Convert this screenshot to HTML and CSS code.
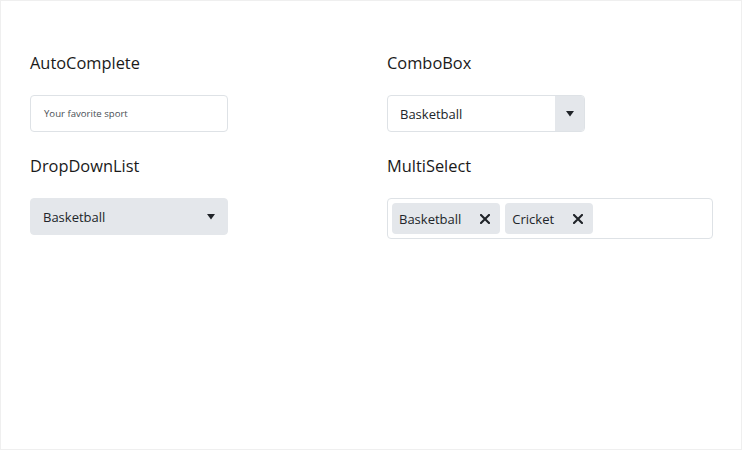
FILE: index.html
```html
<!DOCTYPE html>
<html lang="en">
<head>
<meta charset="utf-8">
<title>Inputs</title>
<link rel="stylesheet" href="styles.css">
</head>
<body>
<div class="page">
  <div class="grid">
    <div class="field">
      <div class="label">AutoComplete</div>
      <div class="input autocomplete"><span class="placeholder">Your favorite sport</span></div>
    </div>
    <div class="field">
      <div class="label">ComboBox</div>
      <div class="input combobox">
        <span class="value">Basketball</span>
        <span class="combo-btn"><svg class="caret" viewBox="0 0 8 6" width="8" height="6"><path d="M0 0H8L4 5.5Z" fill="#1f2328"/></svg></span>
      </div>
    </div>
    <div class="field">
      <div class="label">DropDownList</div>
      <div class="input dropdown">
        <span class="value">Basketball</span>
        <svg class="caret" viewBox="0 0 8 6" width="8" height="6"><path d="M0 0H8L4 5.5Z" fill="#1f2328"/></svg>
      </div>
    </div>
    <div class="field">
      <div class="label">MultiSelect</div>
      <div class="input multiselect">
        <span class="chip"><span class="chip-text">Basketball</span><svg class="x" viewBox="0 0 10 10" width="10" height="10"><path d="M1 1L9 9M9 1L1 9" stroke="#1f2328" stroke-width="2.1" stroke-linecap="square"/></svg></span>
        <span class="chip"><span class="chip-text">Cricket</span><svg class="x" viewBox="0 0 10 10" width="10" height="10"><path d="M1 1L9 9M9 1L1 9" stroke="#1f2328" stroke-width="2.1" stroke-linecap="square"/></svg></span>
      </div>
    </div>
  </div>
</div>
</body>
</html>
```
FILE: styles.css
```css
* { box-sizing: border-box; }
html, body { margin: 0; padding: 0; background: #fff; }
.page {
  width: 742px;
  height: 450px;
  border: 1px solid #efefef;
  padding: 52px 0 0 29px;
  font-family: "Open Sans", "Liberation Sans", sans-serif;
  color: #212529;
}
.grid {
  display: grid;
  grid-template-columns: 357px 325px;
  row-gap: 24px;
  align-items: start;
}
.field { display: flex; flex-direction: column; align-items: flex-start; }
.label {
  font-size: 16.4px;
  line-height: 20px;
  color: #1a1a1a;
  margin-bottom: 22px;
}
.input {
  height: 37px;
  width: 198px;
  border: 1px solid #dee2e6;
  border-radius: 4px;
  display: flex;
  align-items: center;
  font-size: 13px;
}
.autocomplete { padding-left: 13px; }
.placeholder { font-size: 9.6px; color: #4a4f55; }
.combobox { padding-left: 12px; overflow: hidden; }
.combobox .value { flex: 1; }
.combo-btn {
  width: 29px;
  align-self: stretch;
  background: #e4e7eb;
  display: flex;
  align-items: center;
  justify-content: center;
}
.dropdown {
  background: #e4e7eb;
  border-color: #e4e7eb;
  padding: 0 12px 0 12px;
}
.dropdown .value { flex: 1; }
.caret { display: block; }
.multiselect {
  width: 326px;
  height: 41px;
  padding: 0 4px;
  gap: 5px;
}
.chip {
  height: 31px;
  background: #e4e7eb;
  border-radius: 4px;
  display: flex;
  align-items: center;
  padding: 0 10px 0 7px;
}
.chip-text { margin-right: 19px; }
.x { display: block; }
```
